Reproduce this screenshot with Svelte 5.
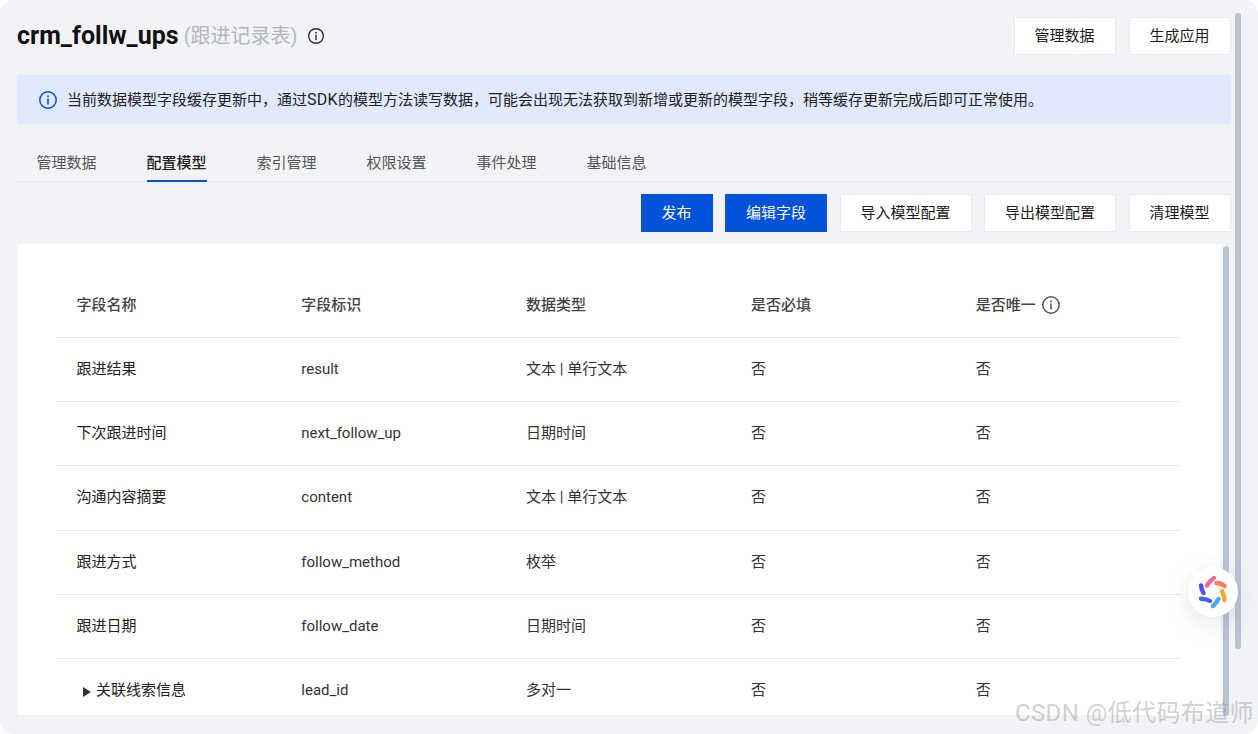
<script>
  const tabs = ['管理数据', '配置模型', '索引管理', '权限设置', '事件处理', '基础信息'];
  const rows = [
    ['跟进结果', 'result', '文本 | 单行文本'],
    ['下次跟进时间', 'next_follow_up', '日期时间'],
    ['沟通内容摘要', 'content', '文本 | 单行文本'],
    ['跟进方式', 'follow_method', '枚举'],
    ['跟进日期', 'follow_date', '日期时间'],
    ['关联线索信息', 'lead_id', '多对一', true]
  ];
</script>

{#snippet info(size, color)}
  <svg class="info" width={size} height={size} viewBox="0 0 18 18" fill="none" stroke={color}>
    <circle cx="9" cy="9" r="8.2" stroke-width="1.5" />
    <path d="M9 7.6v5.8" stroke-width="1.6" />
    <path d="M9 4.4v1.8" stroke-width="1.7" />
  </svg>
{/snippet}

<div class="page">
  <header class="head">
    <div class="title">
      <h1>crm_follw_ups</h1>
      <span class="cn">(跟进记录表)</span>
      {@render info(16, '#2b2b2b')}
    </div>
    <div class="btns">
      <button>管理数据</button>
      <button>生成应用</button>
    </div>
  </header>

  <div class="alert">
    {@render info(18, '#0052d9')}
    <span>当前数据模型字段缓存更新中，通过<span class="sdk">SDK</span>的模型方法读写数据，可能会出现无法获取到新增或更新的模型字段，稍等缓存更新完成后即可正常使用。</span>
  </div>

  <nav class="tabs">
    {#each tabs as t, i}
      <div class="tab" class:active={i === 1}>{t}</div>
    {/each}
  </nav>

  <div class="tools">
    <button class="primary">发布</button>
    <button class="primary">编辑字段</button>
    <button>导入模型配置</button>
    <button>导出模型配置</button>
    <button>清理模型</button>
  </div>

  <section class="panel">
    <div class="table">
      <div class="row hd">
        <div>字段名称</div>
        <div>字段标识</div>
        <div>数据类型</div>
        <div>是否必填</div>
        <div class="uniq">是否唯一 {@render info(18, '#555')}</div>
      </div>
      {#each rows as r}
        <div class="row">
          <div class="name" class:tree={r[3]}>
            {#if r[3]}<span class="arrow"></span>{/if}{r[0]}
          </div>
          <div>{r[1]}</div>
          <div>{r[2]}</div>
          <div>否</div>
          <div>否</div>
        </div>
      {/each}
    </div>
  </section>

  <div class="sb outer"></div>
  <div class="sb inner"></div>

  <div class="fab">
    <svg width="50" height="50" viewBox="0 0 50 50" fill="none" stroke-width="4.4" stroke-linecap="round">
      <path d="M19 18.5Q22 13.5 26 11" stroke="#f8659a" />
      <path d="M28.5 16Q33 16 36.8 19" stroke="#ff7d66" />
      <path d="M34 24Q36 28 36.5 33" stroke="#ffa51f" />
      <path d="M30.5 32Q28 36.5 25 39" stroke="#4aa8ff" />
      <path d="M13 31.7Q18 31.5 22 34" stroke="#3f63f2" />
      <path d="M13 18.5Q13.5 23 15.5 26" stroke="#5250f0" />
    </svg>
  </div>

  <div class="mark">CSDN @低代码布道师</div>
</div>

<style>
  :global(body) {
    margin: 0;
    background: #fff;
  }
  .page {
    position: relative;
    box-sizing: border-box;
    width: 1258px;
    height: 734px;
    padding: 17px 27px 19px 17px;
    background: #f2f3f7;
    border-radius: 14px;
    overflow: hidden;
    display: flex;
    flex-direction: column;
    font: 15px/22px Roboto, "Noto Sans CJK SC", sans-serif;
    color: #1f1f1f;
  }
  button {
    box-sizing: border-box;
    height: 38px;
    padding: 0 20.5px 0 19.5px;
    margin: 0;
    background: #fff;
    border: 1px solid #e8eaf0;
    font: inherit;
    color: #1a1a1a;
    white-space: nowrap;
  }
  button.primary {
    background: #0052d9;
    border-color: #0052d9;
    color: #fff;
  }
  .head {
    display: flex;
    justify-content: space-between;
    align-items: flex-start;
  }
  .title {
    display: flex;
    align-items: center;
    height: 38px;
  }
  h1 {
    margin: 0;
    font-size: 25px;
    font-weight: 700;
    line-height: 38px;
    color: #111;
  }
  .cn {
    margin-left: 5px;
    font-size: 20px;
    color: #b4b6bc;
  }
  .title .info {
    margin-left: 11px;
  }
  .btns {
    display: flex;
    gap: 13px;
  }
  .alert {
    height: 49px;
    margin-top: 20px;
    padding-left: 22px;
    display: flex;
    align-items: center;
    gap: 10px;
    background: #e0e9fd;
    color: #222;
  }
  .sdk {
    font-size: 16px;
    letter-spacing: 0.3px;
  }
  .tabs {
    display: flex;
    gap: 50px;
    height: 58px;
    box-sizing: border-box;
    padding-left: 19.5px;
    border-bottom: 1px solid #e6e7ec;
  }
  .tab {
    box-sizing: border-box;
    height: 58px;
    padding-top: 28px;
    color: #555;
    white-space: nowrap;
  }
  .tab.active {
    color: #222;
    font-weight: 500;
    border-bottom: 2px solid #0052d9;
  }
  .tools {
    display: flex;
    justify-content: flex-end;
    gap: 12.5px;
    margin-top: 12px;
  }
  .panel {
    flex: 1;
    min-height: 0;
    overflow: hidden;
    margin-top: 12px;
    margin-right: 10px;
    padding: 29px 40px 0;
    background: #fff;
  }
  .table {
    width: 1124px;
  }
  .row {
    display: grid;
    grid-template-columns: repeat(5, 1fr);
    align-items: center;
    height: 64.2px;
    padding-bottom: 1px;
    box-sizing: border-box;
    border-bottom: 1px solid #e8e9ee;
    color: #333;
  }
  .row > div {
    padding-left: 19.5px;
  }
  .row:last-child {
    border-bottom: 0;
    padding-bottom: 2.5px;
  }
  .row.hd {
    height: 65px;
    padding-bottom: 0;
    font-weight: 500;
    color: #444;
  }
  .uniq {
    display: flex;
    align-items: center;
    gap: 6px;
  }
  .name {
    color: #222;
  }
  .row > .tree {
    display: flex;
    align-items: center;
    padding-left: 26px;
  }
  .arrow {
    width: 0;
    height: 0;
    margin: 5px 5px 0 0;
    border-left: 8.5px solid #333;
    border-top: 5.5px solid transparent;
    border-bottom: 5.5px solid transparent;
  }
  .sb {
    position: absolute;
    width: 6px;
    background: #bac3d0;
    border-radius: 3px;
  }
  .outer {
    left: 1235px;
    top: 13px;
    height: 636px;
  }
  .inner {
    left: 1223px;
    top: 246px;
    height: 470px;
  }
  .fab {
    position: absolute;
    left: 1188px;
    top: 567px;
    width: 50px;
    height: 50px;
    border-radius: 50%;
    background: #fff;
    box-shadow: 0 6px 24px rgba(60, 70, 100, 0.14);
  }
  .fab svg {
    display: block;
  }
  .mark {
    position: absolute;
    right: 4px;
    top: 696px;
    font-size: 24px;
    line-height: 34px;
    letter-spacing: 0.4px;
    color: rgba(150, 150, 150, 0.45);
    white-space: nowrap;
  }
</style>
